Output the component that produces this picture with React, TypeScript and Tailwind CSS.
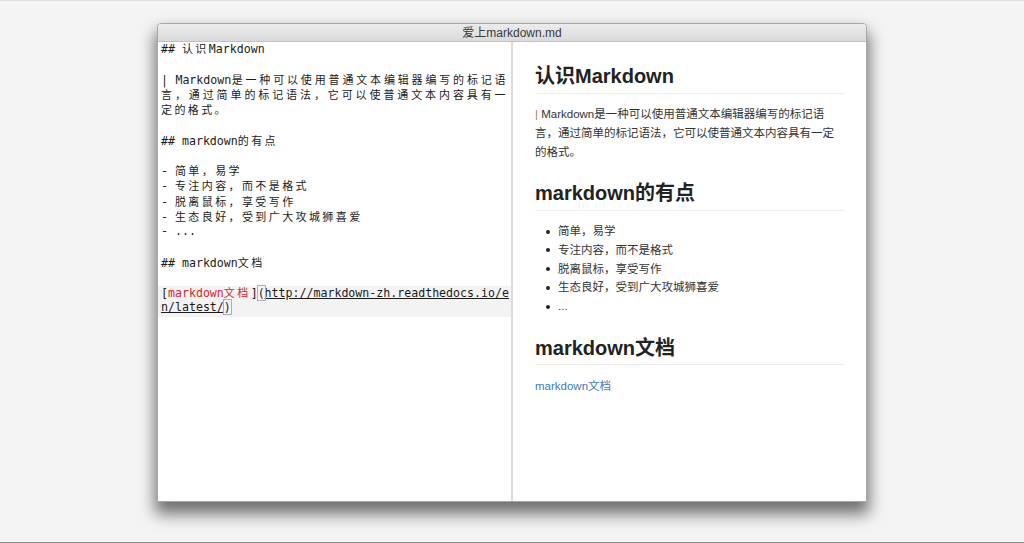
import React from 'react';

const CJK = /([\u2e80-\u9fff\u3000-\u303f\uff00-\uffef]+)/;

// editor text: latin stays mono, CJK runs get the wider double-cell spacing
function Src({ text }: { text: string }) {
  return (
    <>
      {text.split(CJK).map((s, i) =>
        i % 2 ? (
          <span key={i} className="font-['Noto_Sans_CJK_SC',sans-serif] text-[11px] tracking-[2.4px]">
            {s}
          </span>
        ) : (
          <React.Fragment key={i}>{s}</React.Fragment>
        )
      )}
    </>
  );
}

function Line({ children, justify, hl }: { children?: React.ReactNode; justify?: boolean; hl?: boolean }) {
  return (
    <div
      className={`h-[15.25px] leading-[13px] whitespace-pre pl-[3px] pr-[3px] ${
        justify ? 'text-justify [text-align-last:justify]' : ''
      } ${hl ? 'bg-[#f3f3f3]' : ''}`}
    >
      {children}
    </div>
  );
}

const items = ['简单，易学', '专注内容，而不是格式', '脱离鼠标，享受写作', '生态良好，受到广大攻城狮喜爱', '...'];

export default function App() {
  return (
    <div className="h-[543px] bg-[#f4f4f4] border-t border-t-[#dedede] border-b border-b-[#8c8c8c] pt-[22px] overflow-hidden">
      <div className="mx-auto w-[710px] h-[479px] flex flex-col rounded-t-[4px] bg-white border border-[#a8a8a8] shadow-[0_10px_16px_2px_rgba(0,0,0,0.55)]">
        <div className="h-[18px] shrink-0 rounded-t-[4px] bg-gradient-to-b from-[#ececec] to-[#dadada] border-b border-[#c2c2c2] flex items-center justify-center font-['Liberation_Sans','Noto_Sans_CJK_SC',sans-serif] text-[12px] text-[#3a3a3a]">
          爱上markdown.md
        </div>
        <div className="flex flex-1 min-h-0">
          <div className="w-[353px] shrink-0 font-['DejaVu_Sans_Mono','Noto_Sans_CJK_SC',monospace] text-[11.6px] text-[#1b1b1b]">
            <Line><Src text="## 认识Markdown" /></Line>
            <Line />
            <Line justify><Src text="| Markdown是一种可以使用普通文本编辑器编写的标记语" /></Line>
            <Line justify><Src text="言，通过简单的标记语法，它可以使普通文本内容具有一" /></Line>
            <Line><Src text="定的格式。" /></Line>
            <Line />
            <Line><Src text="## markdown的有点" /></Line>
            <Line />
            <Line><Src text="- 简单，易学" /></Line>
            <Line><Src text="- 专注内容，而不是格式" /></Line>
            <Line><Src text="- 脱离鼠标，享受写作" /></Line>
            <Line><Src text="- 生态良好，受到广大攻城狮喜爱" /></Line>
            <Line><Src text="- ..." /></Line>
            <Line />
            <Line><Src text="## markdown文档" /></Line>
            <Line />
            <Line hl>
              [<span className="text-[#d7262e]"><Src text="markdown文档" /></span>]
              <span className="outline outline-1 outline-[#b0b0b0]">(</span>
              <span className="underline">http://markdown-zh.readthedocs.io/e</span>
            </Line>
            <Line hl>
              <span className="underline">n/latest/</span>
              <span className="outline outline-1 outline-[#b0b0b0]">)</span>
            </Line>
          </div>
          <div className="w-[2px] shrink-0 bg-[#dcdcdc]" />
          <div className="flex-1 pl-[22px] pr-[21px] pt-[22px] font-['Liberation_Sans','Noto_Sans_CJK_SC',sans-serif] text-[#333]">
            <h1 className="text-[20px] leading-[25px] font-bold text-[#222] pb-[4px] border-b border-[#eeeeee]">认识Markdown</h1>
            <p className="mt-[11px] text-[11.5px] leading-[19px]">
              <span className="text-[#a08060]">|</span> Markdown是一种可以使用普通文本编辑器编写的标记语
              <br />
              言，通过简单的标记语法，它可以使普通文本内容具有一定
              <br />
              的格式。
            </p>
            <h2 className="mt-[19px] text-[20px] leading-[25px] font-bold text-[#222] pb-[4px] border-b border-[#eeeeee]">markdown的有点</h2>
            <ul className="mt-[11px] pl-[23px] text-[11.5px] leading-[18.75px]">
              {items.map((t) => (
                <li key={t} className="relative">
                  <span className="absolute left-[-12px] top-[7.5px] w-[4px] h-[4px] rounded-full bg-[#222]" />
                  {t}
                </li>
              ))}
            </ul>
            <h2 className="mt-[20px] text-[20px] leading-[25px] font-bold text-[#222] pb-[3px] border-b border-[#eeeeee]">markdown文档</h2>
            <p className="mt-[12px] text-[11.5px] leading-[19px]">
              <a className="text-[#4078c0]">markdown文档</a>
            </p>
          </div>
        </div>
      </div>
    </div>
  );
}
